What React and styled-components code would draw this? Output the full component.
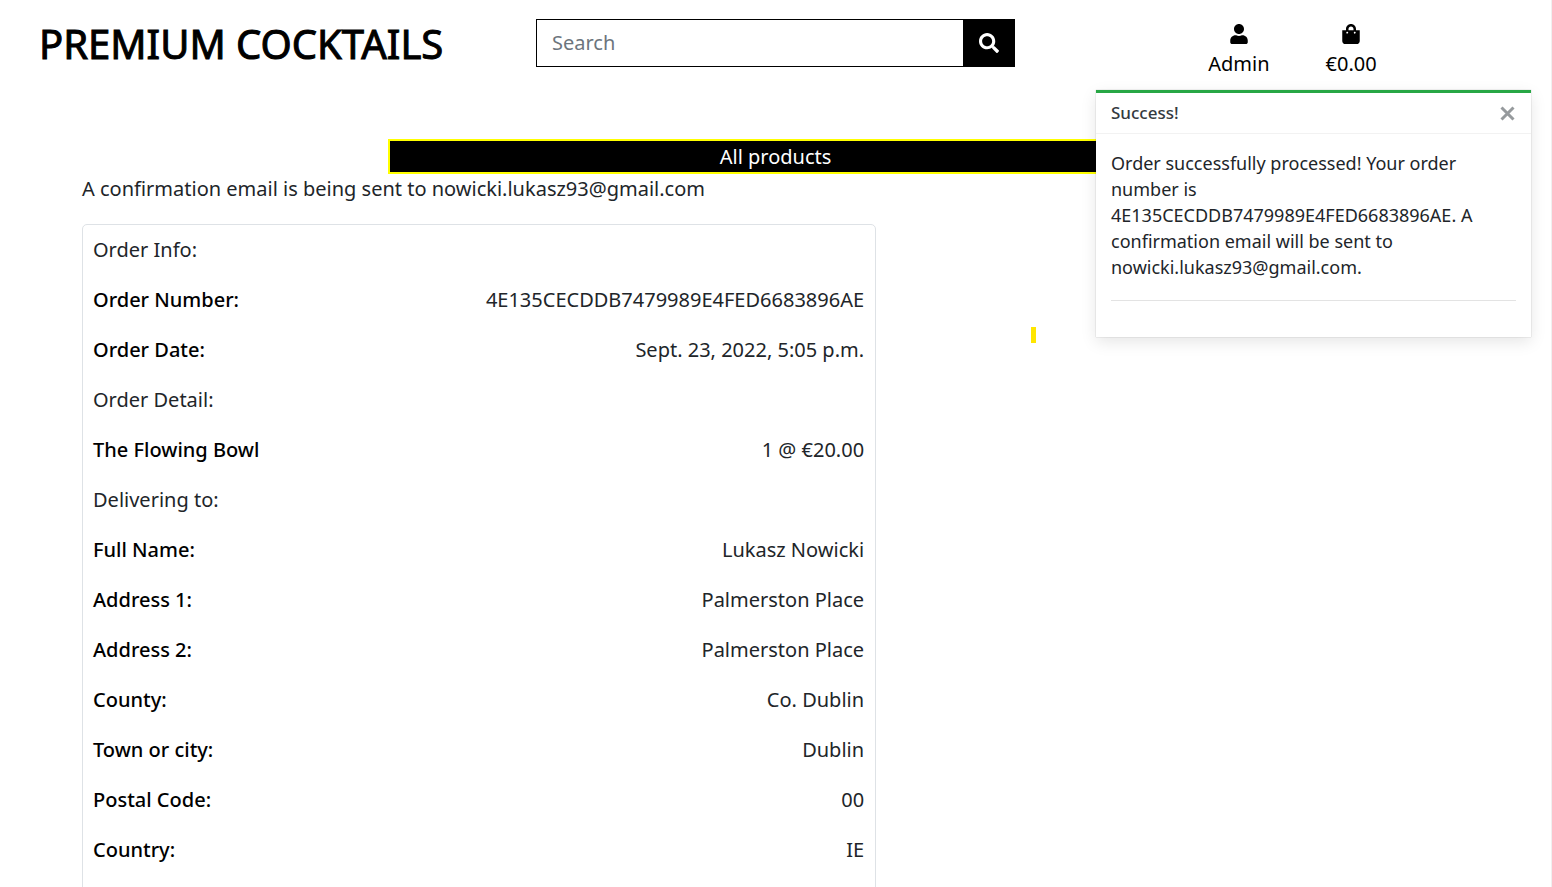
import React from "react";
import styled, { createGlobalStyle } from "styled-components";
import { FaSearch, FaShoppingBag, FaUser } from "react-icons/fa";

const GlobalStyle = createGlobalStyle`
  *, *::before, *::after { box-sizing: border-box; }
  body {
    margin: 0;
    background: #fff;
    color: #212529;
    font-family: "Noto Sans", "Open Sans", sans-serif;
    font-size: 20px;
    font-weight: 400;
    line-height: 30px;
  }
  p, h1, h2 { margin: 0; font-weight: inherit; font-size: inherit; }
`;

const Page = styled.div`
  position: relative;
  height: 100vh;
  overflow: hidden;
  border-right: 1px solid #f0f0f0;
`;

const Header = styled.header`
  display: grid;
  grid-template-columns: repeat(3, 1fr);
  align-items: start;
`;

const Brand = styled.a`
  padding: 14px 0 0 39px;
  color: #000;
  font-size: 40px;
  font-weight: 400;
  line-height: 60px;
  text-decoration: none;
  white-space: nowrap;
  -webkit-text-stroke: 1px #000;
`;

const SearchForm = styled.form`
  display: flex;
  height: 48px;
  margin: 19px 19px 0;
`;

const SearchInput = styled.input`
  flex: 1;
  min-width: 0;
  padding: 0 15px;
  border: 1px solid #000;
  border-right: 0;
  border-radius: 0;
  outline: 0;
  background: #fff;
  font: inherit;
  &::placeholder { color: #6c757d; opacity: 1; }
`;

const SearchButton = styled.button`
  display: flex;
  align-items: center;
  justify-content: center;
  width: 52px;
  padding: 0;
  border: 0;
  background: #000;
  color: #fff;
`;

const AccountLinks = styled.nav`
  display: flex;
  justify-content: center;
  gap: 56px;
  padding-top: 24px;
`;

const AccountLink = styled.a`
  display: flex;
  flex-direction: column;
  align-items: center;
  gap: 5px;
  color: #000;
  text-decoration: none;
`;

const ProductNav = styled.nav`
  width: 50%;
  margin: 60px auto 0;
  border: 2px solid #ff0;
  background: #000;
  text-align: center;
`;

const ProductLink = styled.a`
  display: block;
  color: #fff;
  line-height: 31px;
  text-decoration: none;
`;

const Main = styled.main`
  display: grid;
  grid-template-columns: 7fr 5fr;
  padding: 0 70px;
`;

const OrderColumn = styled.section`
  padding: 0 17px 0 12px;
`;

const OrderCard = styled.div`
  margin-top: 20px;
  padding: 10px 11px 40px 10px;
  border: 1px solid #dee2e6;
  border-radius: 5px;
`;

const SectionTitle = styled.h2`
  margin-bottom: 20px;
`;

const OrderRow = styled.div`
  display: flex;
  justify-content: space-between;
  margin-bottom: 20px;
`;

const RowLabel = styled.p`
  color: #000;
  font-weight: 500;
`;

const RowValue = styled.p`
  text-align: right;
`;

const Marker = styled.div`
  width: 5px;
  height: 16px;
  margin: 153px 0 0 138px;
  background: #ffe600;
`;

const Toast = styled.aside`
  position: absolute;
  top: 90px;
  right: 20px;
  width: 435px;
  border-top: 3px solid #28a745;
  background: #fff;
  box-shadow: 0 0 1px rgba(0, 0, 0, 0.3), 0 5px 15px rgba(0, 0, 0, 0.1);
`;

const ToastHeader = styled.div`
  display: flex;
  align-items: center;
  justify-content: space-between;
  height: 41px;
  padding: 0 16px 0 15px;
  border-bottom: 1px solid #f2f2f2;
`;

const ToastTitle = styled.strong`
  color: #343a40;
  font-size: 17px;
  font-weight: 500;
`;

const CloseButton = styled.button`
  display: flex;
  padding: 0;
  border: 0;
  background: none;
  color: #969a9d;
`;

const ToastBody = styled.div`
  padding: 16px 15px 36px;
  font-size: 18px;
  line-height: 26px;
`;

const ToastRule = styled.hr`
  margin: 20px 0 0;
  border: 0;
  border-top: 1px solid #e3e3e3;
`;

const orderSections = [
  {
    title: "Order Info:",
    rows: [
      ["Order Number:", "4E135CECDDB7479989E4FED6683896AE"],
      ["Order Date:", "Sept. 23, 2022, 5:05 p.m."],
    ],
  },
  { title: "Order Detail:", rows: [["The Flowing Bowl", "1 @ €20.00"]] },
  {
    title: "Delivering to:",
    rows: [
      ["Full Name:", "Lukasz Nowicki"],
      ["Address 1:", "Palmerston Place"],
      ["Address 2:", "Palmerston Place"],
      ["County:", "Co. Dublin"],
      ["Town or city:", "Dublin"],
      ["Postal Code:", "00"],
      ["Country:", "IE"],
    ],
  },
];

export default function App() {
  return (
    <>
      <GlobalStyle />
      <Page>
        <Header>
          <Brand href="#home">PREMIUM COCKTAILS</Brand>
          <SearchForm role="search">
            <SearchInput type="text" placeholder="Search" aria-label="Search" />
            <SearchButton type="submit" aria-label="Submit search">
              <FaSearch size={20} />
            </SearchButton>
          </SearchForm>
          <AccountLinks aria-label="Account">
            <AccountLink href="#account">
              <FaUser size={20} />
              <span>Admin</span>
            </AccountLink>
            <AccountLink href="#bag">
              <FaShoppingBag size={20} />
              <span>€0.00</span>
            </AccountLink>
          </AccountLinks>
        </Header>
        <ProductNav aria-label="Products">
          <ProductLink href="#products">All products</ProductLink>
        </ProductNav>
        <Main>
          <OrderColumn>
            <p>A confirmation email is being sent to nowicki.lukasz93@gmail.com</p>
            <OrderCard>
              {orderSections.map((section) => (
                <React.Fragment key={section.title}>
                  <SectionTitle>{section.title}</SectionTitle>
                  {section.rows.map(([label, value]) => (
                    <OrderRow key={label}>
                      <RowLabel>{label}</RowLabel>
                      <RowValue>{value}</RowValue>
                    </OrderRow>
                  ))}
                </React.Fragment>
              ))}
            </OrderCard>
          </OrderColumn>
          <Marker />
        </Main>
        <Toast role="status">
          <ToastHeader>
            <ToastTitle>Success!</ToastTitle>
            <CloseButton type="button" aria-label="Close">
              <svg width="15" height="15" viewBox="0 0 15 15" aria-hidden="true">
                <path d="M1.5 1.5 13.5 13.5M13.5 1.5 1.5 13.5" stroke="currentColor" strokeWidth="3" />
              </svg>
            </CloseButton>
          </ToastHeader>
          <ToastBody>
            <p>
              Order successfully processed! Your order number is
              4E135CECDDB7479989E4FED6683896AE. A confirmation email will be
              sent to nowicki.lukasz93@gmail.com.
            </p>
            <ToastRule />
          </ToastBody>
        </Toast>
      </Page>
    </>
  );
}
